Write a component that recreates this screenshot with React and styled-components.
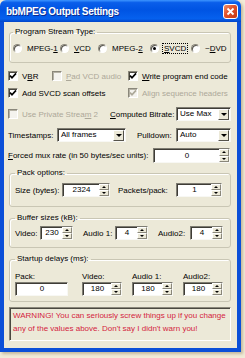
import React from 'react';
import styled, { createGlobalStyle } from 'styled-components';

const Global = createGlobalStyle`
  html, body { margin: 0; padding: 0; }
  body {
    background: #F2EBD8;
    font-family: "Liberation Sans", Arial, sans-serif;
    font-size: 8px;
    color: #000;
  }
  #root { width: 245px; height: 358px; overflow: hidden; }
`;

const Window = styled.div`
  width: 241px;
  height: 352px;
  display: flex;
  flex-direction: column;
  border-radius: 6px 6px 0 0;
  box-shadow: 2px 2px 3px rgba(110, 90, 50, 0.35);
`;

const TitleBar = styled.div`
  height: 22px;
  flex: none;
  display: flex;
  align-items: center;
  justify-content: space-between;
  padding: 0 3px 0 6px;
  border-radius: 6px 6px 0 0;
  background: linear-gradient(#3D95FF 0%, #0A5EEA 12%, #0054E3 45%, #0661EE 85%, #0245C8 100%);
`;

const Title = styled.span`
  color: #fff;
  font-weight: bold;
  font-size: 10px;
  letter-spacing: -0.3px;
  text-shadow: 1px 1px 0 #0B2A8E;
`;

const CloseButton = styled.div`
  width: 15px;
  height: 15px;
  box-sizing: border-box;
  border: 1px solid #fff;
  border-radius: 3px;
  background: linear-gradient(135deg, #F0906A 0%, #E0512B 45%, #C63A13 100%);
  display: flex;
  align-items: center;
  justify-content: center;
`;

const Body = styled.div`
  flex: 1;
  background: #ECE9D8;
  border: solid #0B4FD8;
  border-width: 0 4px 4px 4px;
  padding: 0 6px 0 5px;
  display: flex;
  flex-direction: column;
`;

const Group = styled.fieldset`
  margin: ${p => p.$mt}px 0 0;
  padding: ${p => p.$pt}px ${p => p.$pr ?? 4}px ${p => p.$pb}px ${p => p.$pl ?? 5}px;
  border: 1px solid #C9C6B4;
  border-radius: 3px;
  box-shadow: inset 1px 1px 0 #fff;
  min-width: 0;
`;

const Legend = styled.legend`
  padding: 0 2px;
  margin-left: 0;
  line-height: 10px;
  font-size: 8px;
`;

const RadioRow = styled.div`
  display: flex;
  align-items: center;
  height: 12px;
`;

const RadioItem = styled.div`
  display: flex;
  align-items: center;
  gap: 5px;
  width: ${p => (p.$w ? `${p.$w}px` : 'auto')};
  flex: none;
`;

const RadioCircle = styled.span`
  width: 9px;
  height: 9px;
  box-sizing: border-box;
  border-radius: 50%;
  border: 1px solid;
  border-color: #8A877A #fff #fff #8A877A;
  background: #fff;
  box-shadow: inset 1px 1px 0 #5A5850;
  display: flex;
  align-items: center;
  justify-content: center;
  &::after {
    content: '';
    width: 3px;
    height: 3px;
    border-radius: 50%;
    background: ${p => (p.$on ? '#000' : 'transparent')};
  }
`;

const FocusText = styled.span`
  outline: ${p => (p.$focus ? '1px dotted #000' : 'none')};
  outline-offset: 0;
  padding: 0 1px;
  margin-left: -1px;
`;

const Row = styled.div`
  display: flex;
  align-items: center;
  height: ${p => p.$h ?? 14}px;
  margin: ${p => p.$mt}px 0 0 -1px;
`;

const CheckItem = styled.div`
  display: flex;
  align-items: center;
  gap: 4px;
  width: ${p => (p.$w ? `${p.$w}px` : 'auto')};
  flex: none;
  color: ${p => (p.$disabled ? '#ACA899' : '#000')};
  white-space: nowrap;
`;

const CheckBox = styled.span`
  width: 10px;
  height: 10px;
  box-sizing: border-box;
  border: 1px solid;
  border-color: #8A877A #fff #fff #8A877A;
  background: ${p => (p.$disabled ? '#F4F3EE' : '#fff')};
  box-shadow: inset 1px 1px 0 ${p => (p.$disabled ? '#B5B2A5' : '#4A4840')};
  display: flex;
  align-items: center;
  justify-content: center;
`;

const Label = styled.span`
  width: ${p => (p.$w ? `${p.$w}px` : 'auto')};
  margin-left: ${p => p.$ml ?? 0}px;
  flex: none;
  white-space: nowrap;
`;

const SelectBox = styled.div`
  width: ${p => p.$w}px;
  height: 14px;
  box-sizing: border-box;
  flex: none;
  display: flex;
  background: #fff;
  border: 1px solid;
  border-color: #7E7C72 #F8F8F4 #F8F8F4 #7E7C72;
  box-shadow: inset 1px 1px 0 #3E3C36;
`;

const SelectText = styled.span`
  flex: 1;
  padding: 0 0 0 3px;
  line-height: 12px;
  white-space: nowrap;
  overflow: hidden;
`;

const DropButton = styled.span`
  width: 11px;
  flex: none;
  box-sizing: border-box;
  margin: 1px 1px 0 0;
  height: 11px;
  background: #ECE9D8;
  border: 1px solid;
  border-color: #fff #55534B #55534B #fff;
  display: flex;
  align-items: center;
  justify-content: center;
  &::after {
    content: '';
    border-left: 3px solid transparent;
    border-right: 3px solid transparent;
    border-top: 3px solid #000;
  }
`;

const EditBox = styled.div`
  width: ${p => p.$w}px;
  height: ${p => p.$h ?? 14}px;
  box-sizing: border-box;
  flex: none;
  display: flex;
  background: #fff;
  border: 1px solid;
  border-color: #7E7C72 #F8F8F4 #F8F8F4 #7E7C72;
  box-shadow: inset 1px 1px 0 #3E3C36;
`;

const EditText = styled.span`
  flex: 1;
  text-align: center;
  line-height: ${p => p.$lh ?? 12}px;
  padding-left: 1px;
`;

const Spinner = styled.span`
  width: 10px;
  flex: none;
  display: flex;
  flex-direction: column;
  background: #ECE9D8;
`;

const SpinBtn = styled.span`
  flex: 1;
  box-sizing: border-box;
  border: 1px solid;
  border-color: #fff #8A877A #8A877A #fff;
  display: flex;
  align-items: center;
  justify-content: center;
  &::after {
    content: '';
    border-left: 2px solid transparent;
    border-right: 2px solid transparent;
    ${p => (p.$up ? 'border-bottom: 2px solid #000;' : 'border-top: 2px solid #000;')}
  }
`;

const Spacer = styled.span`
  flex: 1;
`;

const FieldRow = styled.div`
  display: flex;
  align-items: center;
  height: 14px;
`;

const DelayGrid = styled.div`
  display: grid;
  grid-template-columns: 67px 50px 51px 41px;
  grid-template-rows: 10px 14px;
  row-gap: 1px;
  align-items: center;
`;

const Warning = styled.div`
  margin-top: 5px;
  height: 34px;
  box-sizing: border-box;
  border: 1px solid;
  border-color: #8A877A #fff #fff #8A877A;
  box-shadow: inset 1px 1px 0 #4A4840;
  padding: 2px 0 0 3px;
  color: #D42440;
  line-height: 12.5px;
  white-space: nowrap;
  overflow: hidden;
`;

const Check = ({ disabled }) => (
  <svg width="8" height="8" viewBox="0 0 8 8">
    <path d="M1 3.6 L3 5.8 L7 1.4" fill="none" stroke={disabled ? '#ACA899' : '#000'} strokeWidth="1.7" />
  </svg>
);

const CheckOpt = ({ w, checked, disabled, children }) => (
  <CheckItem $w={w} $disabled={disabled}>
    <CheckBox $disabled={disabled}>{checked && <Check disabled={disabled} />}</CheckBox>
    <span>{children}</span>
  </CheckItem>
);

const Radio = ({ w, on, focus, children }) => (
  <RadioItem $w={w}>
    <RadioCircle $on={on} />
    <FocusText $focus={focus}>{children}</FocusText>
  </RadioItem>
);

const Select = ({ w, value }) => (
  <SelectBox $w={w}>
    <SelectText>{value}</SelectText>
    <DropButton />
  </SelectBox>
);

const Spin = ({ w, value }) => (
  <EditBox $w={w}>
    <EditText>{value}</EditText>
    <Spinner>
      <SpinBtn $up />
      <SpinBtn />
    </Spinner>
  </EditBox>
);

export default function App() {
  return (
    <>
      <Global />
      <Window>
        <TitleBar>
          <Title>bbMPEG Output Settings</Title>
          <CloseButton>
            <svg width="9" height="9" viewBox="0 0 9 9">
              <path d="M1.5 1.5 L7.5 7.5 M7.5 1.5 L1.5 7.5" stroke="#fff" strokeWidth="1.8" />
            </svg>
          </CloseButton>
        </TitleBar>
        <Body>
          <Group $mt={5} $pt={5} $pb={8} $pl={3}>
            <Legend>Program Stream Type:</Legend>
            <RadioRow>
              <Radio w={47}>MPEG-<u>1</u></Radio>
              <Radio w={38}><u>V</u>CD</Radio>
              <Radio w={52}>MPEG-<u>2</u></Radio>
              <Radio w={41} on focus><u>S</u>VCD</Radio>
              <Radio>~<u>D</u>VD</Radio>
            </RadioRow>
          </Group>

          <Row $mt={6}>
            <CheckOpt w={44} checked>V<u>B</u>R</CheckOpt>
            <CheckOpt w={76} disabled><u>P</u>ad VCD audio</CheckOpt>
            <CheckOpt checked><u>W</u>rite program end code</CheckOpt>
          </Row>
          <Row $mt={3}>
            <CheckOpt w={120} checked>Add SVCD scan offsets</CheckOpt>
            <CheckOpt checked disabled>Align sequence headers</CheckOpt>
          </Row>
          <Row $mt={7}>
            <CheckOpt w={102} disabled>Use Private Strea<u>m</u> 2</CheckOpt>
            <Label $w={66}><u>C</u>omputed Bitrate:</Label>
            <Select w={55} value="Use Max" />
          </Row>
          <Row $mt={7}>
            <Label $w={49}>Timestamps:</Label>
            <Select w={69} value="All frames" />
            <Label $ml={11} $w={39}>Pulldown:</Label>
            <Select w={55} value="Auto" />
          </Row>
          <Row $mt={6} $h={15}>
            <Label $w={145}><u>F</u>orced mux rate (in 50 bytes/sec units):</Label>
            <EditBox $w={77} $h={15}>
              <EditText $lh={13}>0</EditText>
              <Spinner>
                <SpinBtn $up />
                <SpinBtn />
              </Spinner>
            </EditBox>
          </Row>

          <Group $mt={5} $pt={5} $pb={9}>
            <Legend>Pack options:</Legend>
            <FieldRow>
              <Label $w={47}>Size (bytes):</Label>
              <Spin w={48} value="2324" />
              <Label $ml={8} $w={58}>Packets/pack:</Label>
              <Spin w={46} value="1" />
              <Spacer />
            </FieldRow>
          </Group>

          <Group $mt={6} $pt={3} $pb={7}>
            <Legend>Buffer sizes (kB):</Legend>
            <FieldRow>
              <Label $w={25}>Video:</Label>
              <Spin w={33} value="230" />
              <Label $ml={10} $w={32}>Audio 1:</Label>
              <Spin w={33} value="4" />
              <Label $ml={10} $w={32}>Audio2:</Label>
              <Spin w={33} value="4" />
              <Spacer />
            </FieldRow>
          </Group>

          <Group $mt={6} $pt={7} $pb={5}>
            <Legend>Startup delays (ms):</Legend>
            <DelayGrid>
              <span>Pack:</span>
              <span>Video:</span>
              <span>Audio 1:</span>
              <span>Audio2:</span>
              <EditBox $w={53}>
                <EditText>0</EditText>
              </EditBox>
              <Spin w={40} value="180" />
              <Spin w={41} value="180" />
              <Spin w={40} value="180" />
            </DelayGrid>
          </Group>

          <Warning>
            WARNING! You can seriously screw things up if you change
            <br />
            any of the values above. Don't say I didn't warn you!
          </Warning>
        </Body>
      </Window>
    </>
  );
}
